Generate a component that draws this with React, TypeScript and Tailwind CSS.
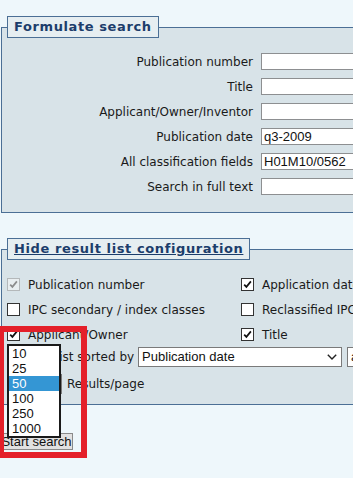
import React from "react";

function Box({ checked, disabled }: { checked?: boolean; disabled?: boolean }) {
  return (
    <span
      className={
        disabled
          ? "inline-flex shrink-0 w-[13px] h-[13px] border border-[#b4b8ba] bg-[#e9eef0] items-center justify-center"
          : "inline-flex shrink-0 w-[13px] h-[13px] border border-[#333333] bg-white items-center justify-center"
      }
    >
      {checked && (
        <svg width="11" height="11" viewBox="0 0 11 11">
          <path
            d="M2.2 5.6 L4.4 7.9 L8.9 2.4"
            stroke={disabled ? "#8c8c8c" : "#111111"}
            strokeWidth="1.7"
            fill="none"
          />
        </svg>
      )}
    </span>
  );
}

function Field({ label, value }: { label: string; value?: string }) {
  return (
    <>
      <div className="h-[25px] flex items-center justify-end text-right">{label}</div>
      <div className="h-[25px] flex items-center">
        <div className="w-[170px] h-[17px] border border-[#8d8f91] bg-white flex items-center pl-[2px] font-['Liberation_Sans',sans-serif] text-[13px] leading-[15px] text-[#111]">
          {value}
        </div>
      </div>
    </>
  );
}

function CheckItem({ label, checked, disabled }: { label: string; checked?: boolean; disabled?: boolean }) {
  return (
    <div className="h-[25px] flex items-center gap-[8px] whitespace-nowrap">
      <Box checked={checked} disabled={disabled} />
      <span>{label}</span>
    </div>
  );
}

export default function App() {
  return (
    <div className="relative w-[353px] h-[478px] overflow-hidden bg-[#eef7fb] font-['DejaVu_Sans',sans-serif] text-[12px] text-[#1a1a1a]">
      <div className="w-[440px] pt-[16px]">
        <fieldset className="ml-[1px] border border-[#4b6f95] bg-[#d8e3e8] pt-[11px] pb-[13px]">
          <legend className="ml-[5px] px-[6px] h-[22px] leading-[20px] border border-[#4b6f95] bg-[#e6eef1] text-[13px] font-bold tracking-[0.6px] text-[#1c3d6b]">
            Formulate search
          </legend>
          <div className="grid grid-cols-[251px_180px] gap-x-[8px]">
            <Field label="Publication number" />
            <Field label="Title" />
            <Field label="Applicant/Owner/Inventor" />
            <Field label="Publication date" value="q3-2009" />
            <Field label="All classification fields" value="H01M10/0562" />
            <Field label="Search in full text" />
          </div>
        </fieldset>

        <fieldset className="mt-[25px] ml-[1px] border border-[#4b6f95] bg-[#d8e3e8] pt-[12px] pb-[10px]">
          <legend className="ml-[5px] px-[6px] h-[22px] leading-[20px] border border-[#4b6f95] bg-[#e6eef1] text-[13px] font-bold tracking-[0.6px] text-[#1c3d6b] underline">
            Hide result list configuration
          </legend>
          <div className="grid grid-cols-[234px_200px] pl-[5px]">
            <CheckItem label="Publication number" checked disabled />
            <CheckItem label="Application date" checked />
            <CheckItem label="IPC secondary / index classes" />
            <CheckItem label="Reclassified IPC" />
            <CheckItem label="Applicant/Owner" checked />
            <CheckItem label="Title" checked />
          </div>
          <div className="h-[20px] flex items-center pl-[13px] whitespace-nowrap">
            <span>Result list sorted by</span>
            <div className="ml-[4px] w-[204px] h-[20px] border border-[#7a7a7a] bg-white flex items-center justify-between pl-[3px] pr-[4px] font-['Liberation_Sans',sans-serif] text-[13px] text-[#111]">
              <span>Publication date</span>
              <svg width="10" height="6" viewBox="0 0 10 6">
                <path d="M0.8 0.8 L5 5 L9.2 0.8" stroke="#222" strokeWidth="1.4" fill="none" />
              </svg>
            </div>
            <div className="ml-[5px] w-[80px] h-[20px] border border-[#7a7a7a] bg-white flex items-center pl-[3px] font-['Liberation_Sans',sans-serif] text-[13px] text-[#111]">
              ascending
            </div>
          </div>
          <div className="mt-[6px] h-[21px] flex items-center pl-[5px] whitespace-nowrap">
            <div className="w-[55px] h-[20px] border border-[#7a7a7a] bg-white" />
            <span className="ml-[5px]">Results/page</span>
          </div>
        </fieldset>

        <div className="mt-[28px] flex">
          <div className="w-[73px] h-[17px] border border-[#8a8a8a] bg-[#e1e1e1] flex items-center justify-center font-['Liberation_Sans',sans-serif] text-[13px] leading-[15px] text-[#111] whitespace-nowrap overflow-hidden">
            Start search
          </div>
        </div>
      </div>

      <div className="absolute left-[7px] top-[344px] w-[54px] h-[94px] border-2 border-[#1a1a1a] bg-white font-['Liberation_Sans',sans-serif] text-[13px] text-[#111]">
        <div className="h-[15px] leading-[15px] pl-[3px]">10</div>
        <div className="h-[15px] leading-[15px] pl-[3px]">25</div>
        <div className="h-[15px] leading-[15px] pl-[3px] bg-[#3496d4] text-white">50</div>
        <div className="h-[15px] leading-[15px] pl-[3px]">100</div>
        <div className="h-[15px] leading-[15px] pl-[3px]">250</div>
        <div className="h-[15px] leading-[15px] pl-[3px]">1000</div>
      </div>

      <div className="absolute left-[-2px] top-[326px] w-[89px] h-[132px] border-[6px] border-[#e4202a]" />
    </div>
  );
}
